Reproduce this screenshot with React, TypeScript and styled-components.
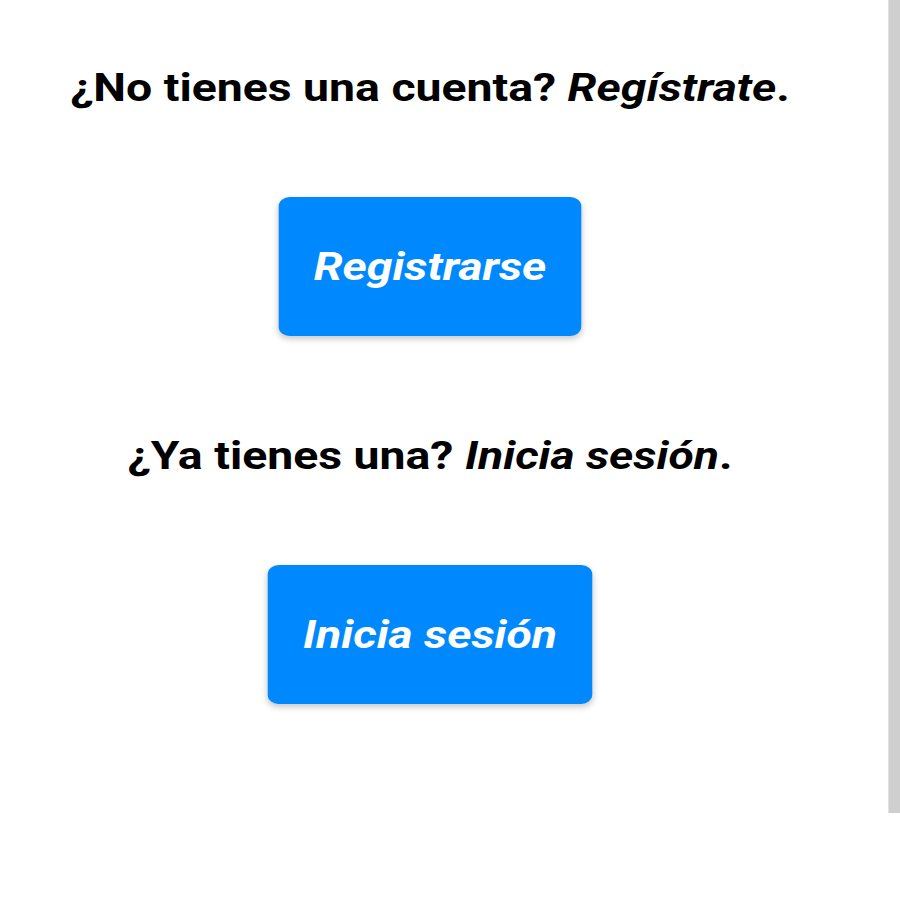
import React from "react";
import styled, { createGlobalStyle } from "styled-components";

const Global = createGlobalStyle`
  html, body { margin: 0; padding: 0; background: #ffffff; }
  body { font-family: Roboto, "Noto Sans", sans-serif; }
`;

const Page = styled.div`
  display: flex;
  width: 900px;
  height: 900px;
  align-items: flex-start;
  overflow: hidden;
`;

const Column = styled.div`
  width: 860px;
  display: flex;
  justify-content: center;
`;

/* The reference is stretched horizontally by ~1.22 */
const Main = styled.main`
  width: 700px;
  display: flex;
  flex-direction: column;
  align-items: center;
  padding-top: 64px;
  transform: scaleX(1.22);
  transform-origin: 50% 0;
`;

const Spacer = styled.div`
  flex: 1;
`;

const Bar = styled.div`
  width: 12px;
  height: 813px;
  background: #cfcfcf;
  border-left: 1px solid #e2e2e2;
  box-sizing: border-box;
`;

const Section = styled.section<{ $gap: number }>`
  display: flex;
  flex-direction: column;
  align-items: center;
  margin-bottom: ${(p) => p.$gap}px;
`;

const Prompt = styled.p`
  margin: 0;
  font-family: Roboto, sans-serif;
  font-weight: 700;
  font-size: 38px;
  line-height: 48px;
  color: #000;
  white-space: nowrap;
  em { font-style: italic; }
`;

const Button = styled.button<{ $top: number }>`
  margin-top: ${(p) => p.$top}px;
  border: none;
  border-radius: 9px;
  background: #0088ff;
  color: #fff;
  font-family: Roboto, sans-serif;
  font-weight: 700;
  font-style: italic;
  font-size: 38px;
  height: 139px;
  padding: 0 29px;
  box-shadow: 0 3px 6px rgba(0, 0, 0, 0.22);
  cursor: pointer;
  white-space: nowrap;
`;

export default function App() {
  return (
    <>
      <Global />
      <Page>
        <Column>
          <Main>
            <Section $gap={96}>
              <Prompt>
                ¿No tienes una cuenta? <em>Regístrate</em>.
              </Prompt>
              <Button $top={85}>Registrarse</Button>
            </Section>
            <Section $gap={0}>
              <Prompt>
                ¿Ya tienes una? <em>Inicia sesión</em>.
              </Prompt>
              <Button $top={85}>Inicia sesión</Button>
            </Section>
          </Main>
        </Column>
        <Spacer />
        <Bar />
      </Page>
    </>
  );
}
